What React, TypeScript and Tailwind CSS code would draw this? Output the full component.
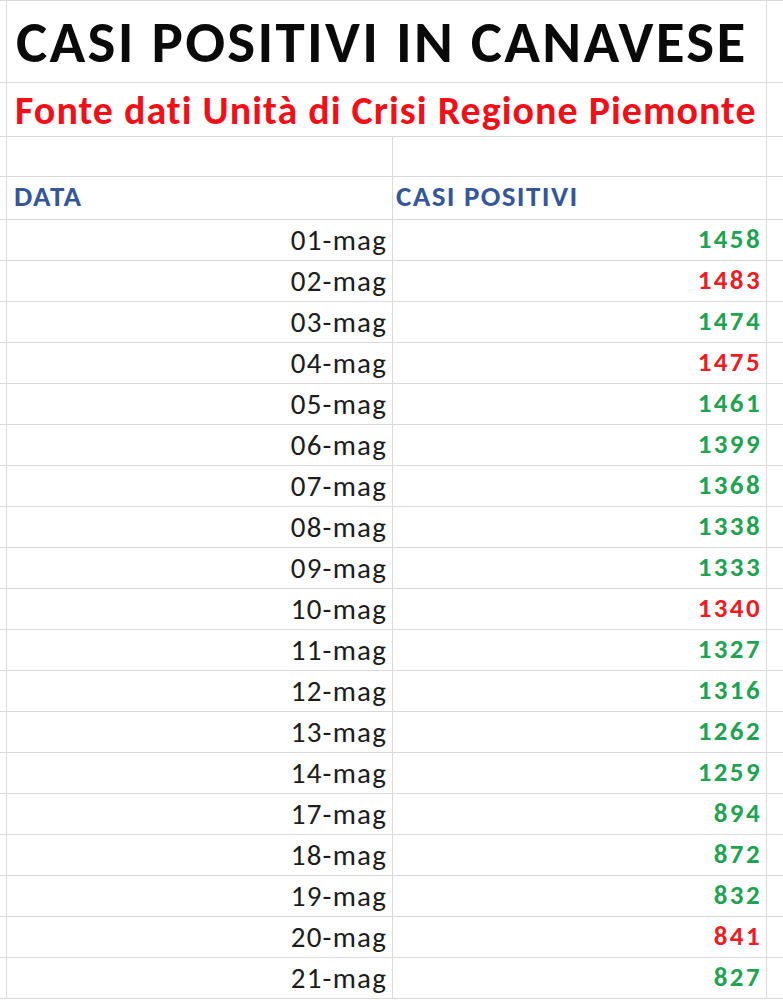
import React from 'react';

type Row = {
  date: string;
  cases: number;
  up: boolean;
};

const ROWS: Row[] = [
  { date: '01-mag', cases: 1458, up: false },
  { date: '02-mag', cases: 1483, up: true },
  { date: '03-mag', cases: 1474, up: false },
  { date: '04-mag', cases: 1475, up: true },
  { date: '05-mag', cases: 1461, up: false },
  { date: '06-mag', cases: 1399, up: false },
  { date: '07-mag', cases: 1368, up: false },
  { date: '08-mag', cases: 1338, up: false },
  { date: '09-mag', cases: 1333, up: false },
  { date: '10-mag', cases: 1340, up: true },
  { date: '11-mag', cases: 1327, up: false },
  { date: '12-mag', cases: 1316, up: false },
  { date: '13-mag', cases: 1262, up: false },
  { date: '14-mag', cases: 1259, up: false },
  { date: '17-mag', cases: 894, up: false },
  { date: '18-mag', cases: 872, up: false },
  { date: '19-mag', cases: 832, up: false },
  { date: '20-mag', cases: 841, up: true },
  { date: '21-mag', cases: 827, up: false },
];

const font = "font-['Carlito','Lato','Open_Sans',sans-serif]";

const App: React.FC = () => {
  return (
    <div className={`h-[1000px] w-[783px] overflow-hidden bg-white ${font}`}>
      {/* title */}
      <div className="flex h-[83px] border-y border-[#d9d9d9]">
        <div className="w-[7px] shrink-0 border-r border-[#d9d9d9]" />
        <div className="flex w-[760px] shrink-0 items-end border-r border-[#d9d9d9] pb-[10px] pl-[9px]">
          <span className="whitespace-nowrap text-[59px] font-bold leading-none tracking-[2.3px] text-[#0a0a0a]">
            CASI POSITIVI IN CANAVESE
          </span>
        </div>
        <div className="flex-1" />
      </div>

      {/* source */}
      <div className="flex h-[54px] border-b border-[#d9d9d9]">
        <div className="w-[7px] shrink-0 border-r border-[#d9d9d9]" />
        <div className="flex w-[760px] shrink-0 items-end border-r border-[#d9d9d9] pb-[5px] pl-[8px]">
          <span className="whitespace-nowrap text-[40px] font-bold leading-none tracking-[1px] text-[#f0101a]">
            Fonte dati Unità di Crisi Regione Piemonte
          </span>
        </div>
        <div className="flex-1" />
      </div>

      {/* empty row */}
      <div className="flex h-[40px] border-b border-[#d9d9d9]">
        <div className="w-[7px] shrink-0 border-r border-[#d9d9d9]" />
        <div className="w-[386px] shrink-0 border-r border-[#d9d9d9]" />
        <div className="w-[374px] shrink-0 border-r border-[#d9d9d9]" />
        <div className="flex-1" />
      </div>

      {/* header */}
      <div className="flex h-[43px] border-b border-[#d9d9d9]">
        <div className="w-[7px] shrink-0 border-r border-[#d9d9d9]" />
        <div className="flex w-[386px] shrink-0 items-end border-r border-[#d9d9d9] pb-[8px] pl-[7px]">
          <span className="text-[29px] font-bold leading-none tracking-[1.5px] text-[#35579a]">DATA</span>
        </div>
        <div className="flex w-[374px] shrink-0 items-end border-r border-[#d9d9d9] pb-[8px] pl-[3px]">
          <span className="whitespace-nowrap text-[29px] font-bold leading-none tracking-[1.4px] text-[#35579a]">
            CASI POSITIVI
          </span>
        </div>
        <div className="flex-1" />
      </div>

      {ROWS.map((row) => (
        <div key={row.date} className="flex h-[41px] border-b border-[#d9d9d9]">
          <div className="w-[7px] shrink-0 border-r border-[#d9d9d9]" />
          <div className="flex w-[386px] shrink-0 items-end justify-end border-r border-[#d9d9d9] pb-[5px] pr-[5px]">
            <span className="text-[29px] leading-none tracking-[1.2px] text-[#1c1c1c]">{row.date}</span>
          </div>
          <div className="flex w-[374px] shrink-0 items-end justify-end border-r border-[#d9d9d9] pb-[8px] pr-[4px]">
            <span
              className={`text-[27px] font-bold leading-none tracking-[2.4px] ${
                row.up ? 'text-[#ec1c24]' : 'text-[#1fa353]'
              }`}
            >
              {row.cases}
            </span>
          </div>
          <div className="flex-1" />
        </div>
      ))}
    </div>
  );
};

export default App;
